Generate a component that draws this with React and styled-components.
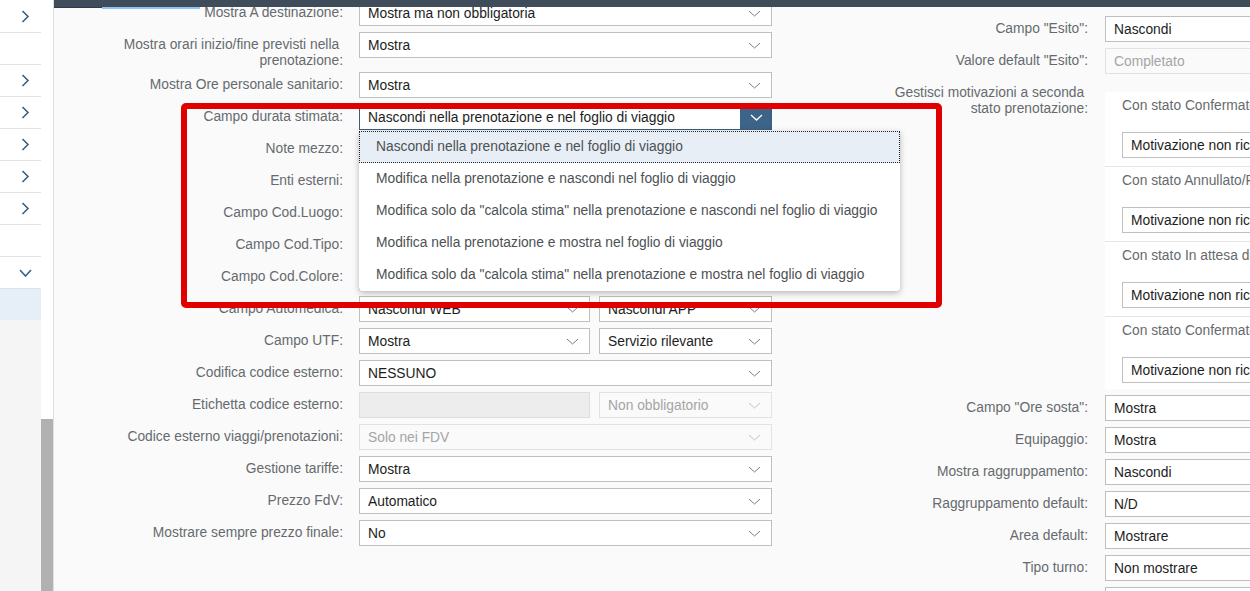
import React from 'react';
import styled, { createGlobalStyle } from 'styled-components';

const GlobalStyle = createGlobalStyle`
  html, body {
    margin: 0;
    padding: 0;
    background: #fafafa;
    font-family: 'Liberation Sans', Arial, sans-serif;
  }
  * { box-sizing: border-box; }
`;

const Page = styled.div`
  position: relative;
  display: flex;
  width: 1250px;
  height: 591px;
  overflow: hidden;
  font-size: 13.8px;
`;

// left navigation list
const Sidebar = styled.div`
  width: 41px;
  display: flex;
  flex-direction: column;
  background: #f5f5f5;
`;

const NavRow = styled.div`
  height: 32px;
  display: flex;
  align-items: center;
  justify-content: center;
  padding-left: 9px;
  background: ${({ $active }) => ($active ? '#e6eef7' : '#ffffff')};
  & + & {
    border-top: 1px solid #e2e2e2;
  }
`;

const ScrollTrack = styled.div`
  width: 13px;
  display: flex;
  flex-direction: column;
  justify-content: flex-end;
  background: #ffffff;
  border-right: 1px solid #dedede;
`;

const ScrollThumb = styled.div`
  height: 172px;
  width: 12px;
  background: #b1b1b1;
`;

const Main = styled.div`
  flex: 1;
  display: flex;
  flex-direction: column;
  background: #fafafa;
  overflow: hidden;
`;

const TopBar = styled.div`
  position: relative;
  z-index: 3;
  height: 7px;
  flex-shrink: 0;
  display: flex;
  background: #3f4d5b;
`;

const TabStub = styled.div`
  width: 48px;
  box-shadow: 0 1px 0 #2e3c4a;
`;

const ActiveTab = styled.div`
  width: 98px;
  box-shadow: 0 2px 0 #8ec4ee;
`;

const Body = styled.div`
  display: flex;
  gap: 16px;
  margin-top: -10px;
`;

const Column = styled.div`
  display: flex;
  flex-direction: column;
  padding-top: ${({ $offset }) => $offset || 0}px;
`;

const Row = styled.div`
  display: grid;
  grid-template-columns: ${({ $labelWidth }) => $labelWidth}px 413px;
  column-gap: ${({ $gap }) => $gap}px;
  padding-top: 3px;
  align-items: start;
`;

const Label = styled.div`
  text-align: right;
  line-height: 16px;
  padding-top: 5px;
  color: #666a6e;
  white-space: nowrap;
`;

const FieldCell = styled.div`
  position: relative;
  display: flex;
  gap: 9px;
  padding-bottom: 3px;
  margin-top: ${({ $top }) => $top || 0}px;
`;

const SelectBox = styled.div`
  position: relative;
  height: 26px;
  width: ${({ $width }) => ($width ? `${$width}px` : '100%')};
  flex-shrink: 0;
  display: flex;
  align-items: center;
  padding: 0 10px 0 8px;
  background: ${({ $disabled }) => ($disabled ? 'transparent' : '#ffffff')};
  border: 1px solid ${({ $disabled, $focused }) =>
    $focused ? '#3a5d80' : $disabled ? '#e2e2e2' : '#bfbfbf'};
  color: ${({ $disabled }) => ($disabled ? '#a5a5a5' : '#1d1d1d')};
  white-space: nowrap;
  overflow: hidden;
`;

const SelectText = styled.span`
  flex: 1;
  overflow: hidden;
`;

const InputBox = styled.div`
  height: 26px;
  width: ${({ $width }) => $width}px;
  flex-shrink: 0;
  background: #ededed;
  border: 1px solid #dedede;
`;

const OpenButton = styled.div`
  width: 32px;
  height: 26px;
  margin: -1px -11px -1px 0;
  display: flex;
  align-items: center;
  justify-content: center;
  background: #3c6388;
`;

const Dropdown = styled.div`
  position: absolute;
  z-index: 4;
  top: 27px;
  left: 0;
  width: 541px;
  padding: 0;
  background: #ffffff;
  border-radius: 0 0 4px 4px;
  box-shadow: 0 2px 6px rgba(0, 0, 0, 0.28);
`;

const Option = styled.div`
  height: 32px;
  line-height: 32px;
  padding: 0 17px;
  color: #4d5154;
  white-space: nowrap;
  background: ${({ $selected }) => ($selected ? '#e8eef5' : 'transparent')};
  outline: ${({ $selected }) => ($selected ? '1px dotted #222' : 'none')};
  outline-offset: -1px;
`;

const Panel = styled.div`
  width: 413px;
  background: #ffffff;
  display: flex;
  flex-direction: column;
`;

const PanelSection = styled.div`
  padding: 6px 0 8px 17px;
  border-bottom: 1px solid #e5e5e5;
  &:last-child {
    border-bottom: none;
    padding-bottom: 6px;
  }
`;

const PanelTitle = styled.div`
  line-height: 16px;
  margin-bottom: 18px;
  color: #666a6e;
  white-space: nowrap;
`;

const Highlight = styled.div`
  position: absolute;
  z-index: 5;
  left: 181px;
  top: 103px;
  width: 761px;
  height: 205px;
  border: 6px solid #e00000;
  border-radius: 5px;
  pointer-events: none;
`;

const ChevronRight = () => (
  <svg width="9" height="13" viewBox="0 0 9 13">
    <polyline points="1.5,1 7,6.5 1.5,12" fill="none" stroke="#35618b" strokeWidth="1.6" />
  </svg>
);

const ChevronDown = ({ color = '#35618b', w = 13, h = 8, sw = 1.6 }) => (
  <svg width={w} height={h} viewBox={`0 0 ${w} ${h}`}>
    <polyline points={`1,1 ${w / 2},${h - 1} ${w - 1},1`} fill="none" stroke={color} strokeWidth={sw} />
  </svg>
);

const Select = ({ value, disabled, width, focused }) => (
  <SelectBox $disabled={disabled} $width={width} $focused={focused}>
    <SelectText>{value}</SelectText>
    {focused ? (
      <OpenButton>
        <ChevronDown color="#ffffff" w={13} h={7} sw={1.3} />
      </OpenButton>
    ) : (
      <ChevronDown color={disabled ? '#c4c4c4' : '#7a7e82'} w={13} h={7} sw={1} />
    )}
  </SelectBox>
);

const navRows = ['right', null, 'right', 'right', 'right', 'right', 'right', null, 'down'];

const durataOptions = [
  'Nascondi nella prenotazione e nel foglio di viaggio',
  'Modifica nella prenotazione e nascondi nel foglio di viaggio',
  'Modifica solo da "calcola stima" nella prenotazione e nascondi nel foglio di viaggio',
  'Modifica nella prenotazione e mostra nel foglio di viaggio',
  'Modifica solo da "calcola stima" nella prenotazione e mostra nel foglio di viaggio',
];

const motivazioni = [
  'Con stato Confermato',
  'Con stato Annullato/Rifiutato',
  'Con stato In attesa di conferma',
  'Con stato Confermato con modifiche',
];

const LeftRow = ({ label, children }) => (
  <Row $labelWidth={289} $gap={16}>
    <Label>{label}</Label>
    <FieldCell>{children}</FieldCell>
  </Row>
);

const RightRow = ({ label, children, top }) => (
  <Row $labelWidth={300} $gap={17}>
    <Label>{label}</Label>
    <FieldCell $top={top}>{children}</FieldCell>
  </Row>
);

const App = () => {
  return (
    <Page>
      <GlobalStyle />
      <Sidebar>
        {navRows.map((r, i) => (
          <NavRow key={i}>
            {r === 'right' && <ChevronRight />}
            {r === 'down' && <ChevronDown />}
          </NavRow>
        ))}
        <NavRow $active />
      </Sidebar>
      <ScrollTrack>
        <ScrollThumb />
      </ScrollTrack>
      <Main>
        <TopBar>
          <TabStub />
          <ActiveTab />
        </TopBar>
        <Body>
          <Column>
            <LeftRow label="Mostra A destinazione:">
              <Select value="Mostra ma non obbligatoria" />
            </LeftRow>
            <LeftRow label={<>Mostra orari inizio/fine previsti nella&nbsp;<br />prenotazione:</>}>
              <Select value="Mostra" />
            </LeftRow>
            <LeftRow label="Mostra Ore personale sanitario:">
              <Select value="Mostra" />
            </LeftRow>
            <LeftRow label="Campo durata stimata:">
              <Select value={durataOptions[0]} focused />
              <Dropdown>
                {durataOptions.map((o, i) => (
                  <Option key={o} $selected={i === 0}>{o}</Option>
                ))}
              </Dropdown>
            </LeftRow>
            <LeftRow label="Note mezzo:">
              <Select value="Mostra" />
            </LeftRow>
            <LeftRow label="Enti esterni:">
              <Select value="Mostra" />
            </LeftRow>
            <LeftRow label="Campo Cod.Luogo:">
              <Select value="Mostra" />
            </LeftRow>
            <LeftRow label="Campo Cod.Tipo:">
              <Select value="Mostra" />
            </LeftRow>
            <LeftRow label="Campo Cod.Colore:">
              <Select value="Mostra" />
            </LeftRow>
            <LeftRow label="Campo Automedica:">
              <Select value="Nascondi WEB" width={231} />
              <Select value="Nascondi APP" width={173} />
            </LeftRow>
            <LeftRow label="Campo UTF:">
              <Select value="Mostra" width={231} />
              <Select value="Servizio rilevante" width={173} />
            </LeftRow>
            <LeftRow label="Codifica codice esterno:">
              <Select value="NESSUNO" />
            </LeftRow>
            <LeftRow label="Etichetta codice esterno:">
              <InputBox $width={231} />
              <Select value="Non obbligatorio" width={173} disabled />
            </LeftRow>
            <LeftRow label="Codice esterno viaggi/prenotazioni:">
              <Select value="Solo nei FDV" disabled />
            </LeftRow>
            <LeftRow label="Gestione tariffe:">
              <Select value="Mostra" />
            </LeftRow>
            <LeftRow label="Prezzo FdV:">
              <Select value="Automatico" />
            </LeftRow>
            <LeftRow label="Mostrare sempre prezzo finale:">
              <Select value="No" />
            </LeftRow>
          </Column>
          <Column $offset={16}>
            <RightRow label={'Campo "Esito":'}>
              <Select value="Nascondi" />
            </RightRow>
            <RightRow label={'Valore default "Esito":'}>
              <Select value="Completato" disabled />
            </RightRow>
            <RightRow
              top={12}
              label={<>Gestisci motivazioni a seconda&nbsp;<br />stato prenotazione:</>}
            >
              <Panel>
                {motivazioni.map((m) => (
                  <PanelSection key={m}>
                    <PanelTitle>{m}</PanelTitle>
                    <Select value="Motivazione non richiesta" />
                  </PanelSection>
                ))}
              </Panel>
            </RightRow>
            <RightRow label={'Campo "Ore sosta":'}>
              <Select value="Mostra" />
            </RightRow>
            <RightRow label="Equipaggio:">
              <Select value="Mostra" />
            </RightRow>
            <RightRow label="Mostra raggruppamento:">
              <Select value="Nascondi" />
            </RightRow>
            <RightRow label="Raggruppamento default:">
              <Select value="N/D" />
            </RightRow>
            <RightRow label="Area default:">
              <Select value="Mostrare" />
            </RightRow>
            <RightRow label="Tipo turno:">
              <Select value="Non mostrare" />
            </RightRow>
            <RightRow label="Mostra turno:">
              <Select value="Mostra" />
            </RightRow>
          </Column>
        </Body>
      </Main>
      <Highlight />
    </Page>
  );
};

export default App;
